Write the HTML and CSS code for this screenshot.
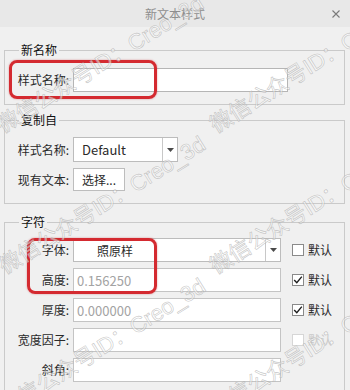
FILE: index.html
```html
<!DOCTYPE html>
<html lang="zh-CN">
<head>
<meta charset="utf-8">
<title>新文本样式</title>
<link rel="stylesheet" href="styles.css">
</head>
<body>
<div class="dialog">
  <div class="titlebar">
    <span class="title">新文本样式</span>
    <svg class="close" width="8" height="8" viewBox="0 0 8 8"><path d="M0.5 0.5 L7.5 7.5 M7.5 0.5 L0.5 7.5" stroke="#7a7a7a" stroke-width="1.1" fill="none"/></svg>
  </div>
  <div class="content">
    <fieldset class="group g-name">
      <legend>新名称</legend>
      <div class="row">
        <span class="lbl">样式名称:</span>
        <div class="field field-name"></div>
      </div>
    </fieldset>

    <fieldset class="group g-copy">
      <legend>复制自</legend>
      <div class="rows">
        <div class="row">
          <span class="lbl">样式名称:</span>
          <div class="select select-copy">
            <span class="select-text">Default</span>
            <span class="select-btn"><svg width="7" height="4" viewBox="0 0 7 4"><path d="M0 0 H7 L3.5 4 Z" fill="#4a4a4a"/></svg></span>
          </div>
        </div>
        <div class="row">
          <span class="lbl">现有文本:</span>
          <div class="button">选择...</div>
        </div>
      </div>
    </fieldset>

    <fieldset class="group g-char">
      <legend>字符</legend>
      <div class="rows rows-char">
        <div class="row">
          <span class="lbl">字体:</span>
          <div class="select select-font">
            <span class="select-text font-text">照原样</span>
            <span class="select-btn"><svg width="7" height="4" viewBox="0 0 7 4"><path d="M0 0 H7 L3.5 4 Z" fill="#4a4a4a"/></svg></span>
          </div>
          <div class="chk"><span class="box"></span><span class="chk-label">默认</span></div>
        </div>
        <div class="row">
          <span class="lbl">高度:</span>
          <div class="field field-char">0.156250</div>
          <div class="chk"><span class="box"><svg width="10" height="10" viewBox="0 0 10 10"><path d="M1.2 5 L3.8 7.8 L8.8 1.6" stroke="#1e1e1e" stroke-width="1.4" fill="none"/></svg></span><span class="chk-label">默认</span></div>
        </div>
        <div class="row">
          <span class="lbl">厚度:</span>
          <div class="field field-char">0.000000</div>
          <div class="chk"><span class="box"><svg width="10" height="10" viewBox="0 0 10 10"><path d="M1.2 5 L3.8 7.8 L8.8 1.6" stroke="#1e1e1e" stroke-width="1.4" fill="none"/></svg></span><span class="chk-label">默认</span></div>
        </div>
        <div class="row">
          <span class="lbl">宽度因子:</span>
          <div class="field field-char"></div>
          <div class="chk chk-disabled"><span class="box"></span><span class="chk-label">默认</span></div>
        </div>
        <div class="row">
          <span class="lbl">斜角:</span>
          <div class="field field-char"></div>
        </div>
      </div>
    </fieldset>
  </div>

  <div class="highlight hl-name"></div>
  <div class="highlight hl-font"></div>

  <div class="watermarks">
    <span class="wm wm-a">微信公众号ID：Creo_3d</span>
    <span class="wm wm-b">微信公众号ID：Creo_3d</span>
    <span class="wm wm-c">微信公众号ID：Creo_3d</span>
    <span class="wm wm-d">微信公众号ID：Creo_3d</span>
    <span class="wm wm-e">微信公众号ID：Creo_3d</span>
    <span class="wm wm-f">微信公众号ID：Creo_3d</span>
  </div>
</div>
</body>
</html>
```

FILE: styles.css
```css
html, body {
  margin: 0;
  padding: 0;
  background: #f0f0f0;
}

body {
  font-family: "Noto Sans CJK SC", "Microsoft YaHei", sans-serif;
  font-size: 12px;
  color: #1c1c1c;
  overflow: hidden;
}

.dialog {
  position: relative;
  width: 350px;
  height: 390px;
  overflow: hidden;
}

.titlebar {
  height: 27px;
  background: #e8e8e8;
  display: grid;
  grid-template-columns: 1fr auto 1fr;
  align-items: center;
}

.title {
  grid-column: 2;
  color: #8e8e8e;
  line-height: 14px;
}

.close {
  grid-column: 3;
  justify-self: end;
  margin-right: 10px;
}

.content {
  padding: 16px 5px 0 4px;
  display: flex;
  flex-direction: column;
}

.group {
  margin: 0;
  min-width: 0;
  border: 1px solid #cacaca;
  padding: 11px 0 12px 6px;
}

.group legend {
  padding: 0 2px;
  margin-left: 8px;
  line-height: 14px;
  font-size: 12px;
  color: #111;
}

.g-copy {
  margin-top: 8px;
  padding-top: 10px;
}

.g-char {
  margin-top: 11px;
  padding-top: 9px;
  padding-bottom: 20px;
}

.rows {
  display: flex;
  flex-direction: column;
  gap: 6px;
}

.row {
  display: flex;
  align-items: center;
}

.lbl {
  flex: none;
  width: 58px;
  margin-right: 4px;
  text-align: right;
  line-height: 14px;
  white-space: nowrap;
  color: #2a2a2a;
}

.field {
  box-sizing: border-box;
  height: 24px;
  border: 1px solid #c4c4c4;
  background: #fff;
  padding-left: 3px;
  display: flex;
  align-items: center;
  font-size: 13px;
  color: #a3a3a3;
}

.field-name {
  width: 215px;
  border-color: #b5b5b5;
}

.field-char {
  width: 208px;
}

.select {
  box-sizing: border-box;
  display: flex;
  height: 25px;
  border: 1px solid #bcbcbc;
  background: #fff;
}

.select-copy {
  width: 105px;
}

.select-font {
  width: 208px;
  height: 24px;
}

.select-text {
  flex: 1;
  display: flex;
  align-items: center;
  padding-left: 8px;
  font-size: 13px;
  color: #2a2a2a;
}

.font-text {
  padding-left: 23px;
  font-size: 12px;
}

.select-btn {
  width: 14px;
  border-left: 1px solid #c8c8c8;
  display: flex;
  align-items: center;
  justify-content: center;
}

.button {
  box-sizing: border-box;
  width: 52px;
  height: 23px;
  border: 1px solid #bdbdbd;
  background: #fff;
  display: flex;
  align-items: center;
  justify-content: center;
  color: #2a2a2a;
}

.chk {
  display: flex;
  align-items: center;
  gap: 4px;
  margin-left: 11px;
}

.box {
  box-sizing: border-box;
  width: 12px;
  height: 12px;
  border: 1px solid #8a8a8a;
  background: #fff;
  display: flex;
  align-items: center;
  justify-content: center;
}

.chk-label {
  line-height: 14px;
  color: #2a2a2a;
}

.chk-disabled .box {
  border-color: #d6d6d6;
}

.chk-disabled .chk-label {
  color: #c9c9c9;
}

.highlight {
  position: absolute;
  box-sizing: border-box;
  border: 3px solid #d42a30;
  border-radius: 8px;
  box-shadow: 0 0 2px rgba(190, 20, 30, 0.45);
  pointer-events: none;
}

.hl-name {
  left: 9px;
  top: 60px;
  width: 148px;
  height: 39px;
}

.hl-font {
  left: 27px;
  top: 238px;
  width: 130px;
  height: 56px;
}

.watermarks {
  position: absolute;
  inset: 0;
  pointer-events: none;
}

.wm {
  position: absolute;
  font-family: "Liberation Sans", "Noto Sans CJK SC", sans-serif;
  font-size: 22px;
  line-height: 22px;
  white-space: nowrap;
  color: rgba(255, 255, 255, 0.5);
  -webkit-text-stroke: 0.6px rgba(160, 160, 160, 0.6);
  transform: rotate(-32deg);
  transform-origin: 0 100%;
}

.wm-a { left: 5px;   top: 115px; }
.wm-b { left: 218px; top: 115px; }
.wm-c { left: 7px;   top: 256px; }
.wm-d { left: 218px; top: 256px; }
.wm-e { left: 7px;   top: 398px; }
.wm-f { left: 218px; top: 398px; }
```
